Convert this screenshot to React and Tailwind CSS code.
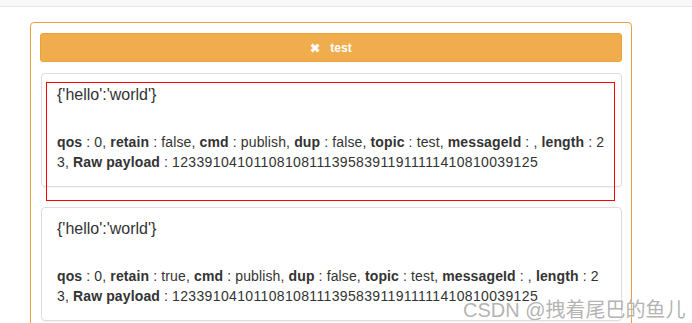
import React from "react";

const messages = [
  { retain: "false" },
  { retain: "true" },
];

function Label({ children }) {
  return <span className="font-bold">{children}</span>;
}

function MessageCard({ retain }) {
  return (
    <div className="ml-[1px] w-[581px] border border-[#dddddd] rounded-[4px] pl-[15px] pr-[13px] pt-[10px] pb-[14px] shadow-[0_1px_1px_rgba(0,0,0,0.05)] mb-[20px]">
      <div className="text-[16px] leading-[22px] text-[#333]">{"{'hello':'world'}"}</div>
      <p className="mt-[26px] text-[14px] leading-[20px] text-[#333] break-all tracking-[0.13px]">
        <Label>qos</Label> : 0, <Label>retain</Label> : {retain}, <Label>cmd</Label> : publish,{" "}
        <Label>dup</Label> : false, <Label>topic</Label> : test, <Label>messageId</Label> : ,{" "}
        <Label>length</Label> : 23, <Label>Raw payload</Label> :{" "}
        <span className="tracking-[0.35px]">1233910410110810811139583911911111410810039125</span>
      </p>
    </div>
  );
}

export default function App() {
  return (
    <div className="relative w-[692px] h-[323px] overflow-hidden bg-white font-['Liberation_Sans',Arial,sans-serif]">
      {/* top bar */}
      <div className="h-[7px] bg-[#f8f8f8] border-b border-[#e7e7e7]"></div>

      {/* panel */}
      <div className="mt-[15px] ml-[30px] w-[602px] h-[320px] border border-[#eea236] rounded-[4px] px-[9px] pt-[10px]">
        <button className="flex items-center justify-center gap-[10px] w-[582px] h-[29px] bg-[#f0ad4e] border border-[#eea236] rounded-[3px] text-white text-[12px] font-bold mb-[11px]">
          <svg width="10" height="10" viewBox="0 0 10 10">
            <path d="M1.6 1.6 L8.4 8.4 M8.4 1.6 L1.6 8.4" stroke="white" strokeWidth="3" />
          </svg>
          <span>test</span>
        </button>

        {messages.map((m, i) => (
          <MessageCard key={i} retain={m.retain} />
        ))}
      </div>

      {/* red annotation box */}
      <div className="absolute left-[46px] top-[82px] w-[569px] h-[119px] border border-[#ff0000]"></div>

      {/* watermark */}
      <div className="absolute left-[463px] top-[297px] text-[20px] leading-[26px] text-[#a0a0a0]/80 [text-shadow:0_0_2px_#fff] font-['Liberation_Sans','Noto_Sans_CJK_SC',sans-serif]">
        CSDN @拽着尾巴的鱼儿
      </div>
    </div>
  );
}
